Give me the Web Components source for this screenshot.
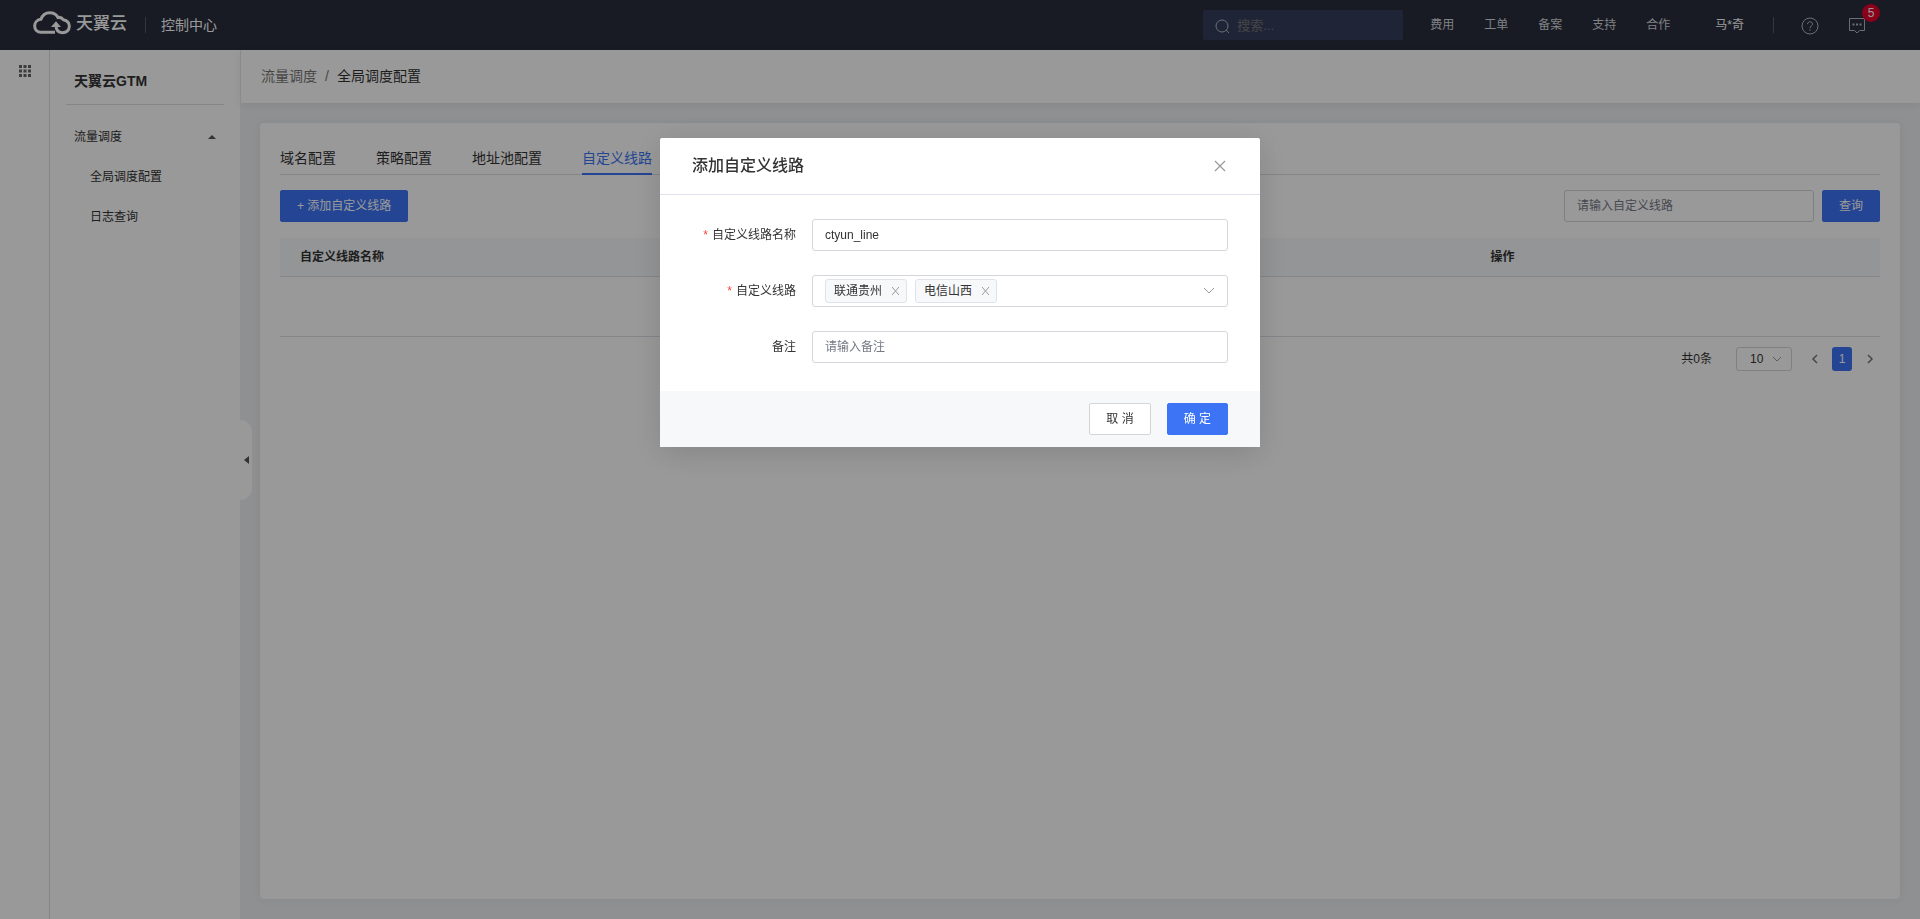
<!DOCTYPE html>
<html lang="zh-CN">
<head>
<meta charset="utf-8">
<title>天翼云GTM - 全局调度配置</title>
<style>
html, body { margin: 0; height: 100%; }
body { font: 12px/20px "Liberation Sans", "Noto Sans CJK SC", sans-serif; color: #333; background: #eef0f3; overflow: hidden; }
</style>
</head>
<body>
<gtm-app>
  <gtm-topbar slot="top"></gtm-topbar>
  <gtm-rail slot="side"></gtm-rail>
  <gtm-sidebar slot="side" heading="天翼云GTM"></gtm-sidebar>
  <gtm-breadcrumb slot="crumb"></gtm-breadcrumb>
  <gtm-panel></gtm-panel>
  <gtm-modal slot="overlay" heading="添加自定义线路">
    <gtm-field label="自定义线路名称" value="ctyun_line" required></gtm-field>
    <gtm-multiselect label="自定义线路" values="联通贵州,电信山西" required></gtm-multiselect>
    <gtm-field label="备注" placeholder="请输入备注"></gtm-field>
    <gtm-button slot="footer">取 消</gtm-button>
    <gtm-button slot="footer" kind="primary">确 定</gtm-button>
  </gtm-modal>
</gtm-app>
<script>
const BASE = `
:host, *, *::before, *::after { box-sizing: border-box; }
button, input, select { font: inherit; color: inherit; margin: 0; }
a { color: inherit; text-decoration: none; }
svg { display: block; fill: none; stroke: currentColor; }
`;
function define(name, css, html) {
  customElements.define(name, class extends HTMLElement {
    constructor() {
      super();
      this.attachShadow({ mode: 'open' });
    }
    connectedCallback() {
      const attr = (key) => this.getAttribute(key) || '';
      const body = typeof html === 'function' ? html(attr, this) : html;
      this.shadowRoot.innerHTML = `<style>${BASE}${css}</style>${body}`;
    }
  });
}

define('gtm-app', `
:host { display: flex; flex-direction: column; height: 100vh; }
.body { display: flex; flex: 1; min-height: 0; }
main { flex: 1; min-width: 0; display: flex; flex-direction: column; position: relative; }
.content { flex: 1; display: flex; flex-direction: column; padding: 20px; }
.content ::slotted(*) { flex: 1; }
.fold { position: absolute; left: 0; top: calc(50% - 65px); width: 12px; height: 80px; padding: 0 0 0 4px;
  border: 0; border-radius: 0 12px 12px 0; background: #fff; color: #555; }
.fold svg { fill: currentColor; stroke: none; }
`, `
<slot name="top"></slot>
<div class="body">
  <slot name="side"></slot>
  <main>
    <slot name="crumb"></slot>
    <div class="content"><slot></slot></div>
    <button class="fold" aria-label="收起菜单"><svg width="5" height="8"><path d="M5 0v8L0 4z"/></svg></button>
  </main>
</div>
<slot name="overlay"></slot>`);

define('gtm-topbar', `
:host { display: flex; align-items: center; height: 50px; flex: none; padding: 0 39px 0 33px; background: #282d3c; color: #fff; }
.logo { display: flex; align-items: center; gap: 5px; font-size: 17px; font-weight: 500; line-height: 24px; padding-bottom: 5px; }
.logo span { padding-top: 2px; }
.bar { width: 1px; height: 16px; background: #555a68; }
.console { font-size: 14px; margin-left: 15px; }
.logo + .bar { margin-left: 18px; }
.search { display: flex; align-items: center; gap: 7px; width: 200px; height: 30px; padding: 2px 0 0 12px; border-radius: 2px; background: #353f5d; color: #b4b8c3; margin-left: auto; }
.search input { width: 150px; border: 0; padding: 0; background: none; outline: 0; font-size: 13px; }
.search input::placeholder { color: #757575; opacity: 1; }
nav { display: flex; gap: 30px; margin: 0 45px 0 27px; color: #d5d7dd; }
.user { margin-right: 29px; }
.ico { display: block; color: #b4b8c3; position: relative; margin-left: 27px; padding-top: 1px; }
.ico + .ico { margin-left: 29px; margin-right: 15px; }
.badge { position: absolute; left: 14px; top: -12px; width: 18px; height: 18px; border-radius: 9px; background: #e6002d; color: #fff; line-height: 18px; text-align: center; }
`, `
<a class="logo" href="#">
  <svg width="38" height="24" viewBox="0 0 114 72" stroke-width="9" stroke-linejoin="round">
    <path d="M66 64H24C12 64 5 55 5 45C5 34 13 26 24 25C28 12 38 5 50 5C62 5 71 11 75 20C80 18 86 20 91 26C102 28 109 36 109 46C109 58 100 65 88 65C76 65 69 57 69 42"/>
    <path d="M54 48L69 31L84 48z" fill="currentColor" stroke="none"/>
  </svg><span>天翼云</span></a>
<i class="bar"></i>
<a class="console" href="#">控制中心</a>
<label class="search">
  <svg width="15" height="15"><circle cx="7" cy="7" r="6"/><path d="M11 11l3 3"/></svg>
  <input type="text" placeholder="搜索..." aria-label="搜索">
</label>
<nav><a href="#">费用</a><a href="#">工单</a><a href="#">备案</a><a href="#">支持</a><a href="#">合作</a></nav>
<a class="user" href="#">马*奇</a>
<i class="bar"></i>
<a class="ico" href="#" aria-label="帮助"><svg width="18" height="18"><circle cx="9" cy="9" r="8"/><path d="M6.5 7.2C6.5 4 11.5 4 11.5 7.1C11.5 9 9 9 9 11.2M9 12.4v1.4"/></svg></a>
<a class="ico" href="#" aria-label="消息"><svg width="18" height="18"><path d="M1.500 1.500h15v12h-5L9 16l-2.500-2.500h-5z"/><path d="M4.500 7.500h2M8 7.500h2M11.500 7.500h2" stroke-width="2"/></svg><span class="badge">5</span></a>`);

define('gtm-rail', `
:host { display: block; width: 50px; flex: none; padding: 15px 0 0 19px; background: #fff; border-right: 1px solid #dcdee5; }
button { border: 0; padding: 0; background: none; color: #666; display: block; }
svg { fill: currentColor; stroke: none; }
`, `<button aria-label="全部产品"><svg width="12" height="12"><path d="M0 0h3v3H0zM4.500 0h3v3h-3zM9 0h3v3H9zM0 4.500h3v3H0zM4.500 4.500h3v3h-3zM9 4.500h3v3H9zM0 9h3v3H0zM4.500 9h3v3h-3zM9 9h3v3H9z"/></svg></button>`);

define('gtm-sidebar', `
:host { display: block; width: 190px; flex: none; padding: 8px 16px; background: #fff; }
h1 { margin: 0 0 12px; padding: 0 8px; font-size: 14px; font-weight: 700; line-height: 46px; border-bottom: 1px solid #dcdee5; }
.group, li a { display: flex; align-items: center; height: 40px; }
.group { justify-content: space-between; width: 100%; border: 0; background: none; padding: 0 8px; }
.group svg { fill: #555; stroke: none; }
ul { list-style: none; margin: 0; padding: 0 0 0 24px; }
`, (attr) => `
<h1>${attr('heading')}</h1>
<button class="group">流量调度<svg width="8" height="4"><path d="M0 4h8L4 0z"/></svg></button>
<ul><li><a href="#">全局调度配置</a></li><li><a href="#">日志查询</a></li></ul>`);

define('gtm-breadcrumb', `
:host { display: flex; align-items: center; gap: 8px; height: 53px; padding: 0 20px 2px; background: #fff; border-left: 1px solid #e4e6ec; font-size: 14px; box-shadow: 0 2px 8px rgba(0, 0, 40, .06); }
a, i { color: #777; font-style: normal; }
`, `<a href="#">流量调度</a><i>/</i><span>全局调度配置</span>`);

define('gtm-button', `
:host { display: block; flex: none; }
button { display: block; height: 32px; padding: 0 16px; border: 1px solid #d4d6db; border-radius: 2px; background: #fff; line-height: 20px; white-space: nowrap; }
:host([kind="primary"]) button { background: #3d73f5; border-color: #3d73f5; color: #fff; }
`, `<button><slot></slot></button>`);

define('gtm-panel', `
:host { display: block; padding: 20px; background: #fff; border-radius: 4px; box-shadow: 0 0 10px rgba(0, 0, 40, .06); }
.tabs { display: flex; gap: 40px; border-bottom: 1px solid #dcdee5; font-size: 14px; line-height: 30px; }
.tabs a { margin-bottom: -1px; border-bottom: 2px solid transparent; }
.tabs a.on { color: #3d73f5; border-color: #3d73f5; }
.tools { display: flex; gap: 8px; margin: 15px 0 16px; }
.tools input { width: 250px; height: 32px; margin-left: auto; padding: 0 12px; border: 1px solid #d4d6db; border-radius: 3px; background: none; }
input::placeholder { color: #757a86; opacity: 1; }
table { width: 100%; border-collapse: separate; border-spacing: 0; table-layout: fixed; }
th { height: 39px; padding: 0 20px; text-align: left; background: #f7f8fa; border-bottom: 1px solid #dcdee5; }
th:first-child { width: 74.400%; }
td { height: 60px; border-bottom: 1px solid #dcdee5; padding: 0; }
`, `
<nav class="tabs"><a href="#">域名配置</a><a href="#">策略配置</a><a href="#">地址池配置</a><a class="on" href="#">自定义线路</a></nav>
<div class="tools"><gtm-button kind="primary">+ 添加自定义线路</gtm-button><input type="text" placeholder="请输入自定义线路" aria-label="自定义线路"><gtm-button kind="primary">查询</gtm-button></div>
<table><thead><tr><th>自定义线路名称</th><th>操作</th></tr></thead><tbody><tr><td colspan="2"></td></tr></tbody></table>
<gtm-pager></gtm-pager>`);

define('gtm-pager', `
:host { display: flex; justify-content: flex-end; align-items: center; gap: 8px; margin-top: 10px; }
.size { position: relative; margin: 0 4px 0 16px; }
select { appearance: none; display: block; width: 56px; height: 24px; padding: 0 0 0 13px; border: 1px solid #d4d6db; border-radius: 3px; background: none; }
.size svg { position: absolute; right: 10px; top: 9px; color: #999; pointer-events: none; }
button { display: grid; place-items: center; width: 20px; height: 24px; padding: 0; border: 0; border-radius: 3px; background: none; color: #777; }
button.on { background: #3d73f5; color: #fff; font-weight: 500; }
`, `
<span>共0条</span>
<label class="size"><select aria-label="每页条数"><option>10</option></select><svg width="10" height="6"><path d="M1 1l4 4 4-4"/></svg></label>
<button aria-label="上一页"><svg width="7" height="10" stroke-width="1.500"><path d="M6 1L2 5l4 4"/></svg></button>
<button class="on">1</button>
<button aria-label="下一页"><svg width="7" height="10" stroke-width="1.500"><path d="M1 1l4 4-4 4"/></svg></button>`);

const FIELD = `
:host { display: flex; align-items: center; gap: 16px; }
label { width: 104px; text-align: right; white-space: nowrap; }
label b { color: #f5463c; font-weight: 400; margin-right: 4px; }
.box { flex: 1; min-width: 0; height: 32px; border: 1px solid #d4d6db; border-radius: 3px; background: #fff; }
input { outline: 0; }
input::placeholder { color: #757a86; opacity: 1; }
`;
const caption = (attr, host) => `<label for="control">${host.hasAttribute('required') ? '<b>*</b>' : ''}${attr('label')}</label>`;

define('gtm-field', FIELD + `.box { padding: 0 12px; }`,
  (attr, host) => `${caption(attr, host)}<input class="box" id="control" type="text" value="${attr('value')}" placeholder="${attr('placeholder')}">`);

define('gtm-multiselect', FIELD + `
.box { display: flex; align-items: center; gap: 8px; padding: 0 12px; }
.tag { display: flex; align-items: center; gap: 10px; height: 24px; padding: 0 7px 0 8px; border: 1px solid #dfe2ea; border-radius: 3px; background: #f7f8fa; }
.tag button { border: 0; padding: 0; background: none; color: #999; }
input { flex: 1; min-width: 0; border: 0; padding: 0; background: none; }
.arrow { color: #999; }
`, (attr, host) => `${caption(attr, host)}
<div class="box">
  ${attr('values').split(',').map((v) => `<span class="tag">${v}<button aria-label="移除${v}"><svg width="7" height="8"><path d="M0 0l7 8M7 0L0 8"/></svg></button></span>`).join('')}
  <input id="control" type="text" role="combobox" aria-expanded="false">
  <svg class="arrow" width="12" height="7"><path d="M1 1l5 5 5-5"/></svg>
</div>`);

define('gtm-modal', `
:host { position: fixed; inset: 0; display: flex; justify-content: center; align-items: flex-start; padding-top: 15vh; background: rgba(0, 0, 0, .4); }
section { width: 600px; background: #fff; border-radius: 2px; box-shadow: 0 6px 32px rgba(0, 0, 0, .14); }
header { display: flex; align-items: center; justify-content: space-between; height: 57px; padding: 0 34px 0 32px; border-bottom: 1px solid #dfe2ee; }
h2 { margin: 0; font-size: 16px; line-height: 24px; font-weight: 500; color: #333; }
header button { padding: 0; border: 0; background: none; color: #999; }
form { display: flex; flex-direction: column; gap: 24px; padding: 24px 32px 28px; }
footer { display: flex; justify-content: flex-end; gap: 16px; padding: 12px 32px; background: #f7f8fa; }
`, (attr) => `
<section role="dialog" aria-modal="true" aria-labelledby="title">
  <header><h2 id="title">${attr('heading')}</h2><button aria-label="关闭"><svg width="12" height="12"><path d="M1 1l10 10M11 1L1 11" stroke-width="1.200"/></svg></button></header>
  <form><slot></slot></form>
  <footer><slot name="footer"></slot></footer>
</section>`);
</script>
</body>
</html>
